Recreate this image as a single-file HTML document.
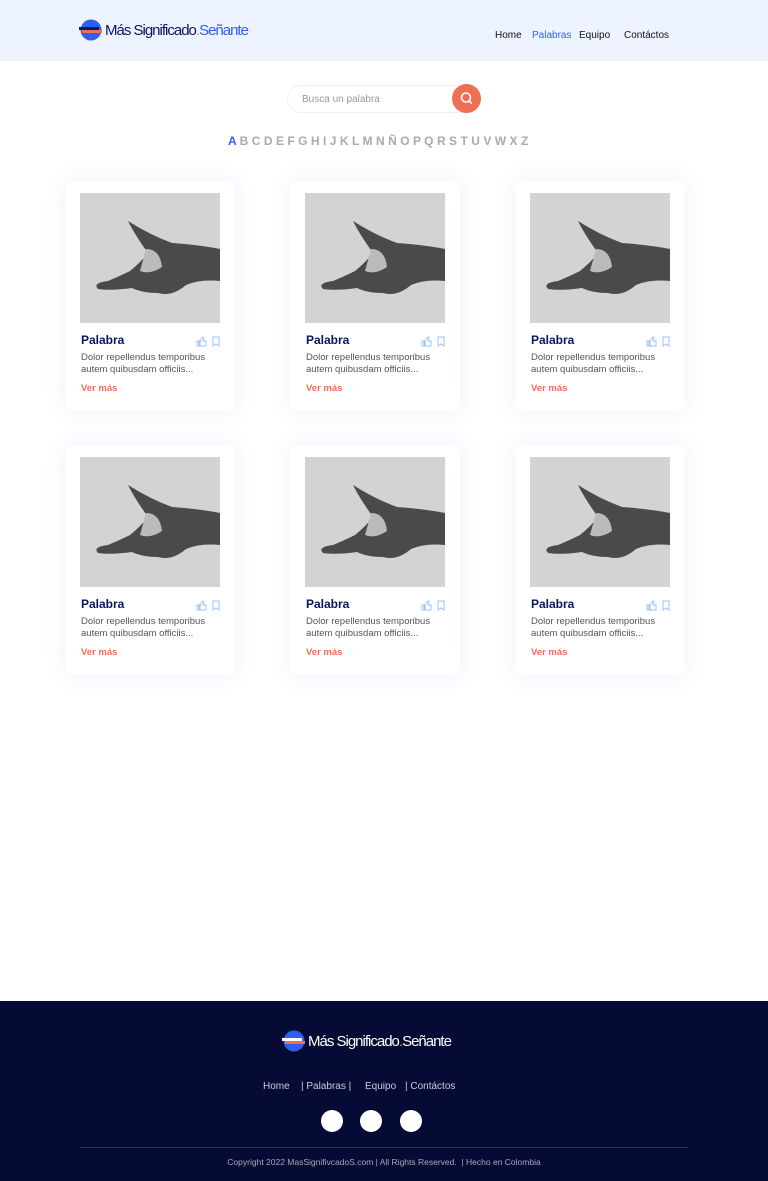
<!DOCTYPE html>
<html><head><meta charset="utf-8"><style>
*{margin:0;padding:0;box-sizing:border-box}
body{width:768px;height:1181px;background:#fff;font-family:"Liberation Sans",sans-serif;position:relative;overflow:hidden}
.hdr{position:absolute;left:0;top:0;width:768px;height:61px;background:#eef4ff}
.logo{position:absolute;display:flex;align-items:center;font-size:15px;letter-spacing:-1px}
.nav{position:absolute;top:30px;font-size:10px;color:#111}
.search{position:absolute;left:287px;top:85px;width:194px;height:28px;border:1px solid #eef1f6;border-radius:14px;font-size:10px;color:#999;padding:8px 14px}
.sbtn{position:absolute;left:452px;top:84px;width:29px;height:29px;border-radius:50%;background:#ef6f55}
.letters{position:absolute;left:228px;top:134px;font-size:12px;color:#aaa;letter-spacing:0.3px;word-spacing:-0.5px;font-weight:bold}
.card{position:absolute;width:170px;height:230px;background:#fff;border-radius:8px;box-shadow:0 0 20px rgba(120,130,255,0.13)}
.img{position:absolute;left:15px;top:12px;width:140px;height:130px;background:#d3d3d3;overflow:hidden}
.t{position:absolute;left:16px;top:152px;font-size:12px;font-weight:bold;color:#0a1560}
.d{position:absolute;left:16px;top:171px;font-size:9.5px;color:#555;line-height:12px;width:140px}
.v{position:absolute;left:16px;top:202px;font-size:9.5px;color:#ef6f55;font-weight:bold}
.ic{position:absolute;top:153px}
.ftr{position:absolute;left:0;top:1001px;width:768px;height:180px;background:#050b35}
.fn{position:absolute;top:1081px;font-size:10px;color:#ccd}
.dot{position:absolute;top:1110px;width:22px;height:22px;border-radius:50%;background:#fff}
</style></head><body>
<div class="hdr"></div>
<div class="logo" style="left:79px;top:19px">
<svg width="23" height="22" viewBox="0 0 23 22"><circle cx="12" cy="11" r="10.5" fill="#2f5ff0"/><path d="M0 8h20v3H0z" fill="#0a1560"/><path d="M3 11h20v3H3z" fill="#ef6f55"/></svg>
<span style="margin-left:3px;color:#0a1560">Más Significado</span><span style="color:#ef6f55">.</span><span style="color:#2f5ff0">Señante</span></div>
<div class="nav" style="left:495px">Home</div>
<div class="nav" style="left:532px;color:#2f5ff0">Palabras</div>
<div class="nav" style="left:579px">Equipo</div>
<div class="nav" style="left:624px">Contáctos</div>
<div class="search">Busca un palabra</div>
<div class="sbtn"><svg width="29" height="29"><circle cx="14" cy="13.5" r="4.5" fill="none" stroke="#fff" stroke-width="1.6"/><path d="M17.3 17l2.5 2.5" stroke="#fff" stroke-width="1.6"/></svg></div>
<div class="letters"><span style="color:#2f5ff0">A</span> B C D E F G H I J K L M N Ñ O P Q R S T U V W X Z</div>

<div class="card" style="left:65px;top:181px"><div class="img"><svg width="140" height="130"><path d="M48 28 Q70 42 92 50 Q120 52 140 56 L140 88 Q120 86 106 92 Q92 104 78 100 Q62 100 52 95 Q32 98 18 96 Q12 90 28 88 Q40 83 50 78 Q60 70 68 60 Q55 42 48 28Z" fill="#4a4a4a"/><path d="M66 56 Q80 56 82 74 Q70 82 60 78Z" fill="#bbb"/></svg></div><div class="t">Palabra</div><div class="ic" style="left:131px"><svg width="26" height="11"><path d="M1 5h2v5H1zM4 5l3-4 1 1-1 3h3v5H4z" fill="none" stroke="#9cc0f5" stroke-width="1"/><path d="M17 1h6v9l-3-2-3 2z" fill="none" stroke="#9cc0f5"/></svg></div><div class="d">Dolor repellendus temporibus autem quibusdam officiis...</div><div class="v">Ver más</div></div>
<div class="card" style="left:290px;top:181px"><div class="img"><svg width="140" height="130"><path d="M48 28 Q70 42 92 50 Q120 52 140 56 L140 88 Q120 86 106 92 Q92 104 78 100 Q62 100 52 95 Q32 98 18 96 Q12 90 28 88 Q40 83 50 78 Q60 70 68 60 Q55 42 48 28Z" fill="#4a4a4a"/><path d="M66 56 Q80 56 82 74 Q70 82 60 78Z" fill="#bbb"/></svg></div><div class="t">Palabra</div><div class="ic" style="left:131px"><svg width="26" height="11"><path d="M1 5h2v5H1zM4 5l3-4 1 1-1 3h3v5H4z" fill="none" stroke="#9cc0f5" stroke-width="1"/><path d="M17 1h6v9l-3-2-3 2z" fill="none" stroke="#9cc0f5"/></svg></div><div class="d">Dolor repellendus temporibus autem quibusdam officiis...</div><div class="v">Ver más</div></div>
<div class="card" style="left:515px;top:181px"><div class="img"><svg width="140" height="130"><path d="M48 28 Q70 42 92 50 Q120 52 140 56 L140 88 Q120 86 106 92 Q92 104 78 100 Q62 100 52 95 Q32 98 18 96 Q12 90 28 88 Q40 83 50 78 Q60 70 68 60 Q55 42 48 28Z" fill="#4a4a4a"/><path d="M66 56 Q80 56 82 74 Q70 82 60 78Z" fill="#bbb"/></svg></div><div class="t">Palabra</div><div class="ic" style="left:131px"><svg width="26" height="11"><path d="M1 5h2v5H1zM4 5l3-4 1 1-1 3h3v5H4z" fill="none" stroke="#9cc0f5" stroke-width="1"/><path d="M17 1h6v9l-3-2-3 2z" fill="none" stroke="#9cc0f5"/></svg></div><div class="d">Dolor repellendus temporibus autem quibusdam officiis...</div><div class="v">Ver más</div></div>
<div class="card" style="left:65px;top:445px"><div class="img"><svg width="140" height="130"><path d="M48 28 Q70 42 92 50 Q120 52 140 56 L140 88 Q120 86 106 92 Q92 104 78 100 Q62 100 52 95 Q32 98 18 96 Q12 90 28 88 Q40 83 50 78 Q60 70 68 60 Q55 42 48 28Z" fill="#4a4a4a"/><path d="M66 56 Q80 56 82 74 Q70 82 60 78Z" fill="#bbb"/></svg></div><div class="t">Palabra</div><div class="ic" style="left:131px"><svg width="26" height="11"><path d="M1 5h2v5H1zM4 5l3-4 1 1-1 3h3v5H4z" fill="none" stroke="#9cc0f5" stroke-width="1"/><path d="M17 1h6v9l-3-2-3 2z" fill="none" stroke="#9cc0f5"/></svg></div><div class="d">Dolor repellendus temporibus autem quibusdam officiis...</div><div class="v">Ver más</div></div>
<div class="card" style="left:290px;top:445px"><div class="img"><svg width="140" height="130"><path d="M48 28 Q70 42 92 50 Q120 52 140 56 L140 88 Q120 86 106 92 Q92 104 78 100 Q62 100 52 95 Q32 98 18 96 Q12 90 28 88 Q40 83 50 78 Q60 70 68 60 Q55 42 48 28Z" fill="#4a4a4a"/><path d="M66 56 Q80 56 82 74 Q70 82 60 78Z" fill="#bbb"/></svg></div><div class="t">Palabra</div><div class="ic" style="left:131px"><svg width="26" height="11"><path d="M1 5h2v5H1zM4 5l3-4 1 1-1 3h3v5H4z" fill="none" stroke="#9cc0f5" stroke-width="1"/><path d="M17 1h6v9l-3-2-3 2z" fill="none" stroke="#9cc0f5"/></svg></div><div class="d">Dolor repellendus temporibus autem quibusdam officiis...</div><div class="v">Ver más</div></div>
<div class="card" style="left:515px;top:445px"><div class="img"><svg width="140" height="130"><path d="M48 28 Q70 42 92 50 Q120 52 140 56 L140 88 Q120 86 106 92 Q92 104 78 100 Q62 100 52 95 Q32 98 18 96 Q12 90 28 88 Q40 83 50 78 Q60 70 68 60 Q55 42 48 28Z" fill="#4a4a4a"/><path d="M66 56 Q80 56 82 74 Q70 82 60 78Z" fill="#bbb"/></svg></div><div class="t">Palabra</div><div class="ic" style="left:131px"><svg width="26" height="11"><path d="M1 5h2v5H1zM4 5l3-4 1 1-1 3h3v5H4z" fill="none" stroke="#9cc0f5" stroke-width="1"/><path d="M17 1h6v9l-3-2-3 2z" fill="none" stroke="#9cc0f5"/></svg></div><div class="d">Dolor repellendus temporibus autem quibusdam officiis...</div><div class="v">Ver más</div></div>

<div class="ftr"></div>
<div class="logo" style="left:282px;top:1030px;color:#fff">
<svg width="23" height="22" viewBox="0 0 23 22"><circle cx="12" cy="11" r="10.5" fill="#2f5ff0"/><path d="M0 8h20v3H0z" fill="#fff"/><path d="M3 11h20v3H3z" fill="#ef6f55"/></svg>
<span style="margin-left:3px">Más Significado</span><span style="color:#ef6f55">.</span><span>Señante</span></div>
<div class="fn" style="left:263px">Home</div>
<div class="fn" style="left:301px">| Palabras |</div>
<div class="fn" style="left:365px">Equipo</div>
<div class="fn" style="left:405px">| Contáctos</div>
<div class="dot" style="left:321px"></div><div class="dot" style="left:360px"></div><div class="dot" style="left:400px"></div>
<div style="position:absolute;left:80px;top:1147px;width:608px;height:1px;background:#2a2f5a"></div>
<div style="position:absolute;left:0;width:768px;top:1157px;text-align:center;font-size:8.5px;color:#aab">Copyright 2022 MasSignifivcadoS.com | All Rights Reserved. &nbsp;| Hecho en Colombia</div>
</body></html>
